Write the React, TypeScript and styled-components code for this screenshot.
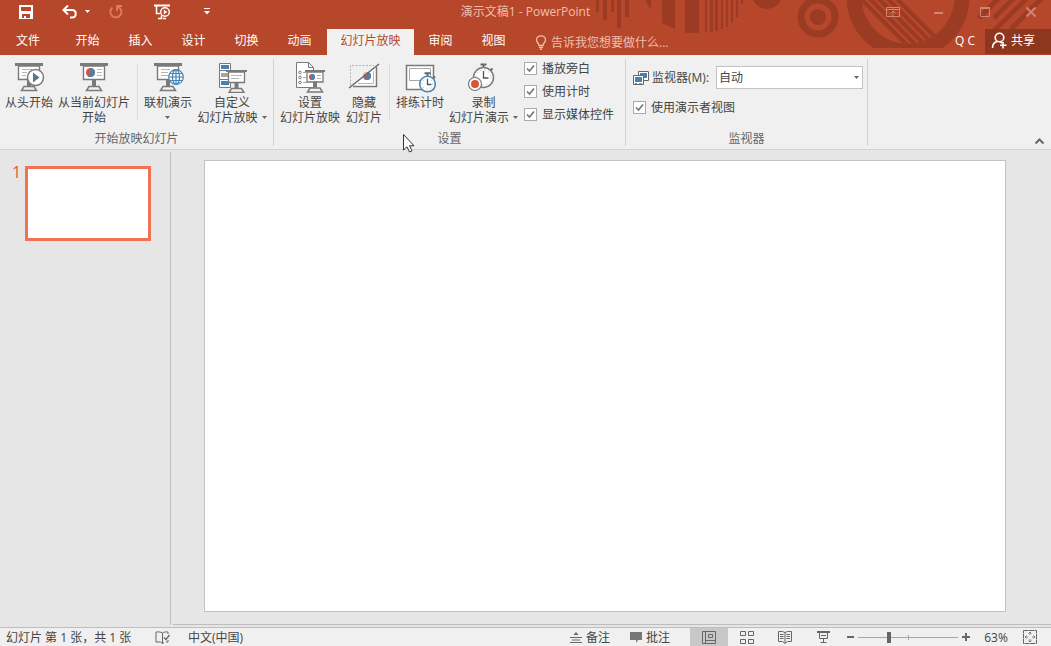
import React from 'react';
import styled, { createGlobalStyle } from 'styled-components';

const Global = createGlobalStyle`
  *, *::before, *::after { box-sizing: border-box; }
  body { margin: 0; background: #e6e6e6; }
  body, button, input, select {
    font-family: 'Open Sans', 'Noto Sans CJK SC', sans-serif;
    font-size: 12px;
    line-height: 15px;
  }
  button { border: 0; padding: 0; background: none; color: inherit; white-space: nowrap; }
  svg { display: block; flex: none; }
`;

const Window = styled.div`
  position: relative;
  display: flex;
  flex-direction: column;
  min-height: 100vh;
  color: #444;
`;

/* ---------- header ---------- */
const Header = styled.header`
  position: relative;
  background: #b7472a;
  color: #fff;
`;
const Decor = styled.svg`
  position: absolute;
  top: 0;
  right: 0;
`;
const TitleRow = styled.div`
  position: relative;
  display: grid;
  grid-template-columns: 1fr auto 1fr;
  align-items: center;
  height: 29px;
  padding-bottom: 6px;
`;
const QuickAccess = styled.div`
  display: flex;
  align-items: center;
  padding-left: 18px;
`;
const QuickButton = styled.button<{ $gap: number }>`
  display: flex;
  align-items: center;
  gap: 7px;
  margin-right: ${(p) => p.$gap}px;
`;
const Title = styled.h1`
  margin: 0;
  font-size: 12px;
  font-weight: 400;
  color: #eebfae;
`;
const WindowControls = styled.div`
  display: flex;
  justify-content: flex-end;
  gap: 32px;
  padding-right: 13px;
  color: #cf8673;
`;
const TabRow = styled.div`
  position: relative;
  display: flex;
  height: 26px;
`;
const Tabs = styled.nav`
  display: flex;
`;
const Tab = styled.button<{ $active?: boolean; $width?: number }>`
  width: ${(p) => p.$width ?? 53}px;
  margin-left: ${(p) => (p.$active ? 1 : 0)}px;
  padding-bottom: 3px;
  background: ${(p) => (p.$active ? '#f1f1f1' : 'none')};
  color: ${(p) => (p.$active ? '#b7472a' : '#fff')};
  &:first-child { margin-right: 5px; }
`;
const TellMe = styled.label`
  display: flex;
  align-items: center;
  gap: 4px;
  margin-left: 15px;
  color: #eebfae;
`;
const TellInput = styled.input`
  width: 140px;
  border: 0;
  padding: 0;
  background: none;
  color: inherit;
  outline: none;
  &::placeholder { color: #eebfae; opacity: 1; }
`;
const Account = styled.div`
  display: flex;
  align-items: center;
  gap: 10px;
  margin-left: auto;
`;
const UserName = styled.span`
  padding-bottom: 3px;
`;
const Share = styled.button`
  display: flex;
  align-items: center;
  gap: 3px;
  height: 25px;
  width: 66px;
  padding: 0 6px 2px;
  margin-bottom: 1px;
  background: #8e371f;
`;

/* ---------- ribbon ---------- */
const Ribbon = styled.div`
  position: relative;
  display: flex;
  padding: 4px 0 3px;
  background: #f0f0f0;
  border-bottom: 1px solid #d2d2d2;
`;
const Group = styled.section`
  display: flex;
  flex-direction: column;
  border-right: 1px solid #d2d2d2;
`;
const GroupBody = styled.div`
  display: flex;
  min-height: 72px;
  padding: 2px 3px 0;
`;
const GroupLabel = styled.div`
  text-align: center;
  color: #666;
`;
const BigButton = styled.button<{ $width: number }>`
  display: flex;
  flex-direction: column;
  align-items: center;
  gap: 2px;
  width: ${(p) => p.$width}px;
`;
const LabelLine = styled.span`
  display: flex;
  align-items: center;
  justify-content: center;
  gap: 4px;
  min-height: 15px;
`;
const Divider = styled.span`
  width: 1px;
  height: 56px;
  margin: 3px 4px 0;
  background: #dcdcdc;
`;
const CheckList = styled.div`
  display: flex;
  flex-direction: column;
  gap: 8px;
  padding: 0 8px 0 3px;
`;
const Check = styled.label`
  display: flex;
  align-items: center;
  gap: 5px;
  white-space: nowrap;
`;
const CheckBox = styled.input`
  appearance: none;
  width: 13px;
  height: 13px;
  margin: 0;
  border: 1px solid #ababab;
  background: #fff;
  &:checked {
    background: #fff
      url("data:image/svg+xml,%3Csvg xmlns='http://www.w3.org/2000/svg' viewBox='0 0 11 11'%3E%3Cpath d='M2 5.5 4.5 8 9 2.5' fill='none' stroke='%23777' stroke-width='1.7'/%3E%3C/svg%3E");
  }
`;
const MonitorBody = styled.div`
  display: flex;
  flex-direction: column;
  gap: 11px;
  min-height: 72px;
  padding: 7px 4px 0 7px;
`;
const MonitorRow = styled.div`
  display: flex;
  align-items: center;
  gap: 3px;
`;
const SelectWrap = styled.span`
  display: grid;
  align-items: center;
  margin-left: 4px;
  & > * { grid-area: 1 / 1; }
  & > svg { justify-self: end; margin-right: 4px; pointer-events: none; }
`;
const Select = styled.select`
  appearance: none;
  width: 147px;
  height: 23px;
  padding: 0 2px;
  border: 1px solid #c3c3c3;
  border-radius: 0;
  background: #fff;
  color: #444;
`;
const Collapse = styled.button`
  align-self: flex-end;
  margin-left: auto;
  padding: 0 6px 1px;
`;

/* ---------- workspace ---------- */
const Workspace = styled.main`
  flex: 1;
  display: flex;
  padding: 2px 0;
  background: #e6e6e6;
`;
const Thumbs = styled.aside`
  display: flex;
  align-items: flex-start;
  gap: 4px;
  width: 171px;
  padding: 14px 19px 0 12px;
  border-right: 1px solid #bdbdbd;
`;
const ThumbNumber = styled.span`
  width: 9px;
  font-size: 16px;
  line-height: 13px;
  color: #d9603f;
`;
const Thumb = styled.button`
  flex: 1;
  height: 75px;
  border: 3px solid #f07252;
  background: #fff;
`;
const Stage = styled.div`
  flex: 1;
  display: flex;
  margin-left: 2px;
  padding: 8px 45px 12px 31px;
  border-bottom: 1px solid #bdbdbd;
`;
const Slide = styled.div`
  flex: 1;
  background: #fff;
  border: 1px solid #c3c3c3;
`;

/* ---------- status bar ---------- */
const Status = styled.footer`
  display: flex;
  align-items: stretch;
  height: 19px;
  border-top: 1px solid #bdbdbd;
  background: #f0f0f0;
`;
const StatusInfo = styled.div`
  display: flex;
  align-items: center;
  gap: 18px;
  padding-left: 6px;
  white-space: nowrap;
`;
const SlideCount = styled.span`
  min-width: 131px;
`;
const StatusTools = styled.div`
  display: flex;
  margin-left: auto;
`;
const TextTool = styled.button`
  display: flex;
  align-items: center;
  gap: 4px;
  margin-right: 20px;
`;
const ViewButton = styled.button<{ $active?: boolean }>`
  display: flex;
  align-items: center;
  justify-content: center;
  width: 38px;
  background: ${(p) => (p.$active ? '#c8c8c8' : 'none')};
`;
const ZoomArea = styled.div`
  display: flex;
  align-items: center;
  gap: 4px;
  padding: 0 14px 0 5px;
`;
const ZoomRange = styled.input`
  appearance: none;
  width: 100px;
  height: 12px;
  margin: 0;
  background:
    linear-gradient(#a6a6a6, #a6a6a6) center / 100% 1px no-repeat,
    linear-gradient(#a6a6a6, #a6a6a6) center / 1px 5px no-repeat;
  &::-webkit-slider-thumb {
    appearance: none;
    width: 4px;
    height: 11px;
    background: #666;
  }
`;
const ZoomValue = styled.button`
  width: 30px;
  margin: 0 8px 0 7px;
`;
const Pointer = styled.svg`
  position: absolute;
  left: 402px;
  top: 133px;
`;

/* ---------- drawings ---------- */
const G = '#7a7a7a';
const BLUE = '#4682b4';
const RED = '#d65532';

const Caret = ({ color = '#666' }: { color?: string }) => (
  <svg width="5" height="3" viewBox="0 0 5 3" fill={color}><path d="M0 0h5L2.500 3z" /></svg>
);

const HeaderDecor = () => (
  <Decor width="461" height="55" viewBox="0 0 461 55" fill="#9b3b24" aria-hidden="true">
    <path d="M6 0h3v12H6zM13 0h4v20h-4zM21 0h3v12h-3zM27 0h4v28h-4zM35 0h4v17h-4zM55 0h6v10zM72 0h13v29l-13-6zM95 0h14v33H95zM115 0h2v32h-2zM120 0h3v32h-3zM125 0h3v31h-3zM131 0h2v29h-2zM136 0h2v27h-2zM141 0h2v23h-2zM146 0h2v17h-2zM151 0h2v4h-2z" />
    <circle cx="177" cy="-6" r="15" />
    <circle cx="228" cy="17" r="17" fill="none" stroke="#9b3b24" strokeWidth="7" />
    <circle cx="228" cy="17" r="8" />
    <clipPath id="flat"><path d="M250 0h150v48H250z" /></clipPath>
    <clipPath id="dial"><circle cx="318" cy="-3" r="47" /></clipPath>
    <circle cx="318" cy="-3" r="54" fill="none" stroke="#9b3b24" strokeWidth="15" clipPath="url(#flat)" />
    <g clipPath="url(#dial)" stroke="#9b3b24" strokeWidth="4">
      <path d="M260-12l60 60M269-12l60 60M278-12l60 60M287-12l60 60M296-12l60 60" />
    </g>
    <g stroke="#9b3b24" strokeWidth="5">
      <path d="M389 18l20-20M404 18l20-20M404 31l33-33M421 29l31-31" />
    </g>
  </Decor>
);

const Stand = ({ x, y }: { x: number; y: number }) => (
  <g>
    <path d={`M${x - 2} ${y}h4v6h-4z`} fill={G} />
    <path d={`M${x - 5} ${y + 6.5}h10l2.500 4h-15z`} fill="#f0f0f0" stroke={G} strokeWidth="1.500" />
  </g>
);
const Board = () => (
  <g>
    <path d="M5.500 5h21v13.500h-21z" fill="#fff" stroke={G} strokeWidth="1.400" />
    <path d="M2 2h28v3H2z" fill={G} />
  </g>
);
const Pie = ({ x, y, r }: { x: number; y: number; r: number }) => (
  <g>
    <circle cx={x} cy={y} r={r} fill={RED} />
    <path d={`M${x} ${y}V${y - r}A${r} ${r} 0 1 1 ${x - r * 0.7} ${y + r * 0.7}z`} fill={BLUE} />
  </g>
);
const Icon = ({ children }: { children: React.ReactNode }) => (
  <svg width="32" height="32" viewBox="0 0 32 32" fill="none" aria-hidden="true">{children}</svg>
);

const FromStart = () => (
  <Icon>
    <Board /><path d="M9 8.500h10M9 11.500h5M9 14.500h4" stroke="#b5b5b5" />
    <Stand x={16} y={19} />
    <circle cx="22.500" cy="16.500" r="8" fill="#fff" stroke={G} strokeWidth="1.500" />
    <path d="M20 11.500v10l6.500-5z" fill="#56788f" />
  </Icon>
);
const FromCurrent = () => (
  <Icon>
    <Board /><Pie x={12.5} y={11.5} r={4.5} />
    <path d="M19 8.500h5M19 11.500h5M19 14.500h5" stroke="#b5b5b5" />
    <Stand x={16} y={19} />
  </Icon>
);
const Online = () => (
  <Icon>
    <Board /><path d="M9 8.500h9M9 11.500h7M9 14.500h7" stroke="#b5b5b5" />
    <Stand x={16} y={19} />
    <g stroke={BLUE} strokeWidth="1.200">
      <circle cx="24" cy="16" r="7.300" fill="#fff" />
      <ellipse cx="24" cy="16" rx="3.500" ry="7.300" />
      <path d="M24 9v14M17 16h14M18 12.500h12M18 19.500h12" />
    </g>
  </Icon>
);
const Custom = () => (
  <Icon>
    <path d="M3.500 2.500h11v24h-11z" fill="#fff" stroke={G} />
    <path d="M5 4h8v4H5zM5 20h8v4H5z" fill={BLUE} />
    <path d="M5 12h8v4H5z" fill="#a6a6a6" />
    <path d="M3 9.500h12M3 18.500h12" stroke={G} />
    <path d="M12.500 11h16v10.500h-16z" fill="#fff" stroke={G} strokeWidth="1.300" />
    <path d="M10 9h21v2H10z" fill={G} />
    <path d="M15 14.500h11M15 17.500h8" stroke="#b5b5b5" />
    <Stand x={20.5} y={21} />
  </Icon>
);
const Setup = () => (
  <Icon>
    <path d="M2.500 1.500h12l5 5v20h-17z" fill="#fff" stroke={G} />
    <path d="M14.500 1.500v5h5" stroke={G} />
    <path d="M9 11.500h3M9 16.500h3M9 21.500h4" stroke="#a6a6a6" />
    <circle cx="6" cy="11.500" r="1.300" stroke={G} /><circle cx="6" cy="16.500" r="1.300" stroke={G} /><circle cx="6" cy="21.500" r="1.300" stroke={G} />
    <path d="M13 11h16v10H13z" fill="#fff" stroke={G} strokeWidth="1.300" />
    <path d="M11 9h20v2H11z" fill={G} />
    <Pie x={18} y={16} r={3} />
    <path d="M23 14.500h4M23 17.500h4" stroke="#b5b5b5" />
    <Stand x={21} y={20.5} />
  </Icon>
);
const Hide = () => (
  <Icon>
    <path d="M28.500 5v20.500H4z" fill="#fff" />
    <path d="M2.500 24V4.500H26" stroke="#666" strokeDasharray="2 1.500" />
    <Pie x={19} y={15} r={4} />
    <path d="M1 4h28L1 26z" fill="#f0f0f0" fillOpacity=".55" />
    <path d="M28.500 6v19.500H5" stroke={G} strokeWidth="1.500" />
    <path d="M25.500 10v12.500H10" stroke="#b5b5b5" />
    <path d="M1 27L31 3" stroke="#666" strokeWidth="1.500" />
  </Icon>
);
const Watch = ({ x, y, r, color }: { x: number; y: number; r: number; color: string }) => (
  <g>
    <path d={`M${x - 3} ${y - r - 4}h6v2h-2v2h-2v-2h-2z`} fill="#666" />
    <path d={`M${x + r * 0.7} ${y - r * 0.7}l2-2`} stroke="#666" strokeWidth="2" />
    <circle cx={x} cy={y} r={r} fill="#fff" stroke={color} strokeWidth="1.500" />
    <circle cx={x} cy={y} r={r - 2.5} stroke="#a6a6a6" strokeDasharray="1 3" />
    <path d={`M${x} ${y - r * 0.65}V${y + 0.5}h${r * 0.5}`} stroke="#555" strokeWidth="1.300" />
  </g>
);
const Rehearse = () => (
  <Icon>
    <path d="M2.500 4.500h27v24h-27z" fill="#fff" stroke={G} strokeWidth="1.500" />
    <path d="M5.500 7.500h21v12h-21z" stroke="#a6a6a6" />
    <Watch x={23.5} y={23} r={7.8} color={BLUE} />
  </Icon>
);
const RecordIcon = () => (
  <Icon>
    <Watch x={15.5} y={16.5} r={10} color={G} />
    <circle cx="7" cy="23" r="6.500" fill="#fff" stroke={G} strokeWidth="1.200" />
    <circle cx="7" cy="23" r="4" fill={RED} />
  </Icon>
);
const MonitorIcon = () => (
  <svg width="16" height="16" viewBox="0 0 16 16" fill="none" aria-hidden="true">
    <path d="M5.500 1.500h10v9h-10z" fill="#fff" stroke="#666" />
    <path d="M7 3h7v5H7z" fill={BLUE} />
    <path d="M.5 5.500h10v9H.5z" fill="#fff" stroke="#666" />
    <path d="M2 7h7v5H2z" fill={BLUE} />
    <path d="M2 13.500h2" stroke={RED} /><path d="M6 13.500h3" stroke="#999" />
  </svg>
);

type Command = { icon: React.ReactNode; lines: string[]; width: number; divider?: boolean; caret?: boolean };
const startCommands: Command[] = [
  { icon: <FromStart />, lines: ['从头开始'], width: 52 },
  { icon: <FromCurrent />, lines: ['从当前幻灯片', '开始'], width: 78, divider: true },
  { icon: <Online />, lines: ['联机演示', ''], width: 52, caret: true },
  { icon: <Custom />, lines: ['自定义', '幻灯片放映'], width: 76, caret: true },
];
const setupCommands: Command[] = [
  { icon: <Setup />, lines: ['设置', '幻灯片放映'], width: 66 },
  { icon: <Hide />, lines: ['隐藏', '幻灯片'], width: 42, divider: true },
  { icon: <Rehearse />, lines: ['排练计时'], width: 52 },
  { icon: <RecordIcon />, lines: ['录制', '幻灯片演示'], width: 75, caret: true },
];

const Commands = ({ items }: { items: Command[] }) => (
  <>
    {items.map((c) => (
      <React.Fragment key={c.lines.join('')}>
        <BigButton type="button" $width={c.width}>
          {c.icon}
          <span>
            {c.lines.map((line, i) => (
              <LabelLine key={i}>
                {line}
                {c.caret && i === c.lines.length - 1 && <Caret />}
              </LabelLine>
            ))}
          </span>
        </BigButton>
        {c.divider && <Divider />}
      </React.Fragment>
    ))}
  </>
);

const tabs = ['文件', '开始', '插入', '设计', '切换', '动画', '幻灯片放映', '审阅', '视图'];

export default function App() {
  return (
    <Window>
      <Global />
      <Header>
        <HeaderDecor />
        <TitleRow>
          <QuickAccess>
            <QuickButton type="button" aria-label="保存" $gap={28}>
              <svg width="16" height="16" viewBox="0 0 16 16" fill="#fff"><path fillRule="evenodd" d="M1 1h14v14H1zM3 3v4h10V3zM4 10v4h2v-2h2v2h4v-4z" /></svg>
            </QuickButton>
            <QuickButton type="button" aria-label="撤消" $gap={18}>
              <svg width="16" height="16" viewBox="0 0 16 16" fill="none" stroke="#fff" strokeWidth="2"><path d="M6 1.500L1.500 6 6 10.500M2 6h8c5 0 5 7.500 0 7.500H8" /></svg>
              <Caret color="#fff" />
            </QuickButton>
            <QuickButton type="button" aria-label="恢复" $gap={29}>
              <svg width="16" height="16" viewBox="0 0 16 16" fill="none" stroke="#dd7a5c" strokeWidth="2"><path d="M4.500 3.500a5.500 5.500 0 1 0 5.500-.7M9 7V2h5" /></svg>
            </QuickButton>
            <QuickButton type="button" aria-label="从头开始放映" $gap={33}>
              <svg width="18" height="16" viewBox="0 0 18 16" fill="none" stroke="#fff"><path d="M1 1.500h16" strokeWidth="2" /><path d="M3.500 2v7.500H7M5 14.500h3.500v-3M10 14.500h3" strokeWidth="1.500" /><circle cx="12" cy="8" r="4.300" strokeWidth="1.400" /><path d="M10.800 5.500v5l3.500-2.500z" fill="#fff" stroke="none" /></svg>
            </QuickButton>
            <QuickButton type="button" aria-label="自定义快速访问工具栏" $gap={0}>
              <svg width="6" height="7" viewBox="0 0 6 7" fill="#fff"><path d="M0 0h6v1H0zM0 3h6L3 6.500z" /></svg>
            </QuickButton>
          </QuickAccess>
          <Title>演示文稿1 - PowerPoint</Title>
          <WindowControls>
            <button type="button" aria-label="功能区显示选项"><svg width="14" height="12" viewBox="0 0 14 12" fill="none" stroke="currentColor"><path d="M.5 1.500h13v9H.5zM1 3.500h12M7 10V5M4.500 7.500L7 5l2.500 2.500" /></svg></button>
            <button type="button" aria-label="最小化"><svg width="14" height="12" viewBox="0 0 14 12" fill="currentColor"><path d="M2 6h9v2H2z" /></svg></button>
            <button type="button" aria-label="最大化"><svg width="14" height="12" viewBox="0 0 14 12" fill="none" stroke="currentColor"><path d="M2.500 1.500h9v9h-9z" /><path d="M2 2h10" strokeWidth="2" /></svg></button>
            <button type="button" aria-label="关闭"><svg width="14" height="12" viewBox="0 0 14 12" fill="none" stroke="currentColor" strokeWidth="2"><path d="M2.500 1.500l9 9M11.500 1.500l-9 9" /></svg></button>
          </WindowControls>
        </TitleRow>
        <TabRow>
          <Tabs>
            {tabs.map((t, i) => (
              <Tab key={t} type="button" $active={i === 6} $width={i === 0 ? 56 : i === 6 ? 87 : undefined}>{t}</Tab>
            ))}
          </Tabs>
          <TellMe>
            <svg width="12" height="15" viewBox="0 0 12 15" fill="none" stroke="currentColor" strokeWidth="1.300"><path d="M4 10.500C4 8 1.500 7.500 1.500 5a4.500 4.200 0 0 1 9 0c0 2.500-2.500 3-2.500 5.500zM4 12.500h4M5 14.300h2" /></svg>
            <TellInput placeholder="告诉我您想要做什么..." aria-label="告诉我您想要做什么" />
          </TellMe>
          <Account>
            <UserName>Q C</UserName>
            <Share type="button">
              <svg width="17" height="17" viewBox="0 0 17 17" fill="none" stroke="#fff" strokeWidth="1.600"><circle cx="8.500" cy="5.500" r="4.300" /><path d="M1.500 16c0-4 2-6 5-6.500M9 9.500l2 1.500M12 10v6.500M9 13.200h6.500" /></svg>
              共享
            </Share>
          </Account>
        </TabRow>
      </Header>

      <Ribbon>
        <Group>
          <GroupBody><Commands items={startCommands} /></GroupBody>
          <GroupLabel>开始放映幻灯片</GroupLabel>
        </Group>
        <Group>
          <GroupBody>
            <Commands items={setupCommands} />
            <CheckList>
              {['播放旁白', '使用计时', '显示媒体控件'].map((t) => (
                <Check key={t}><CheckBox type="checkbox" defaultChecked />{t}</Check>
              ))}
            </CheckList>
          </GroupBody>
          <GroupLabel>设置</GroupLabel>
        </Group>
        <Group>
          <MonitorBody>
            <MonitorRow>
              <MonitorIcon />
              <label htmlFor="monitor">监视器(M):</label>
              <SelectWrap>
                <Select id="monitor" defaultValue="auto"><option value="auto">自动</option></Select>
                <Caret />
              </SelectWrap>
            </MonitorRow>
            <Check><CheckBox type="checkbox" defaultChecked />使用演示者视图</Check>
          </MonitorBody>
          <GroupLabel>监视器</GroupLabel>
        </Group>
        <Collapse type="button" aria-label="折叠功能区">
          <svg width="11" height="7" viewBox="0 0 11 7" fill="none" stroke="#666" strokeWidth="2"><path d="M1.500 5.500l4-4 4 4" /></svg>
        </Collapse>
      </Ribbon>

      <Workspace>
        <Thumbs>
          <ThumbNumber>1</ThumbNumber>
          <Thumb type="button" aria-label="幻灯片 1" />
        </Thumbs>
        <Stage><Slide /></Stage>
      </Workspace>

      <Status>
        <StatusInfo>
          <SlideCount>幻灯片 第 1 张，共 1 张</SlideCount>
          <svg width="15" height="13" viewBox="0 0 15 13" fill="none" stroke="#666"><path d="M7.500 12.500V2C6 .8 3 .8 1 1v10h4.500l2 1.500 1.500-1M7.500 2C9 .8 11 .8 13 1v2M13 9v2h-2" /><path d="M9 6.500l2 2 3.500-4.500" strokeWidth="1.300" /></svg>
          <span>中文(中国)</span>
        </StatusInfo>
        <StatusTools>
          <TextTool type="button">
            <svg width="12" height="12" viewBox="0 0 12 12" stroke="#666"><path d="M6 1L3.500 4h5z" fill="#666" stroke="none" /><path d="M0 6.500h12M2 9h8M0 11.500h12" /></svg>
            备注
          </TextTool>
          <TextTool type="button">
            <svg width="12" height="12" viewBox="0 0 12 12" fill="#777"><path d="M0 1h12v8H8l-2 3V9H0z" /></svg>
            批注
          </TextTool>
          <ViewButton type="button" $active aria-label="普通视图"><svg width="14" height="13" viewBox="0 0 14 13" fill="none" stroke="#666"><path d="M.5.5h13v12H.5zM3.500.5v12M3.500 9.500h10M6.500 3.500h4v3h-4z" /></svg></ViewButton>
          <ViewButton type="button" aria-label="幻灯片浏览"><svg width="14" height="13" viewBox="0 0 14 13" fill="none" stroke="#666"><path d="M.5.5h5v4h-5zM8.500.5h5v4h-5zM.5 8.500h5v4h-5zM8.500 8.500h5v4h-5z" /></svg></ViewButton>
          <ViewButton type="button" aria-label="阅读视图"><svg width="14" height="13" viewBox="0 0 14 13" fill="none" stroke="#666"><path d="M.5.500h4L7 1.500l2.500-1h4v10h-4L7 12.500l-2.500-2h-4zM7 1v11" /><path d="M2 3.500h3.500M2 5.500h3.500M2 7.500h3.500M8.500 3.500H12M8.500 5.500H12M8.500 7.500H12" /></svg></ViewButton>
          <ViewButton type="button" aria-label="幻灯片放映"><svg width="13" height="12" viewBox="0 0 13 12" fill="none" stroke="#666"><path d="M0 1h13" strokeWidth="2" /><path d="M2.500 2v5.500h8V2M4 4.500h5M6.500 7.500v4M3.500 11.500h6" /></svg></ViewButton>
          <ZoomArea>
            <button type="button" aria-label="缩小"><svg width="7" height="8" viewBox="0 0 7 8" fill="#666"><path d="M0 3h7v2H0z" /></svg></button>
            <ZoomRange type="range" min="0" max="100" defaultValue="30" aria-label="缩放" />
            <button type="button" aria-label="放大"><svg width="8" height="8" viewBox="0 0 8 8" fill="#666"><path d="M0 3h3V0h2v3h3v2H5v3H3V5H0z" /></svg></button>
            <ZoomValue type="button">63%</ZoomValue>
            <button type="button" aria-label="适应窗口"><svg width="14" height="14" viewBox="0 0 14 14" fill="none" stroke="#666"><path d="M.5.5h13v13H.5z" strokeDasharray="5 0.500" /><path d="M7 2v3M7 9v3M2 7h3M9 7h3M5.500 3.500L7 2l1.500 1.500M5.500 10.500L7 12l1.500-1.500M3.500 5.500L2 7l1.500 1.500M10.500 5.500L12 7l-1.500 1.500" strokeWidth=".8" /></svg></button>
          </ZoomArea>
        </StatusTools>
      </Status>

      <Pointer width="13" height="20" viewBox="0 0 13 20" fill="#fff" stroke="#333" aria-hidden="true">
        <path d="M1.500 1.500v15.500l3.500-3.200 2.500 5.200 2.500-1.200-2.500-5h4.500z" />
      </Pointer>
    </Window>
  );
}
